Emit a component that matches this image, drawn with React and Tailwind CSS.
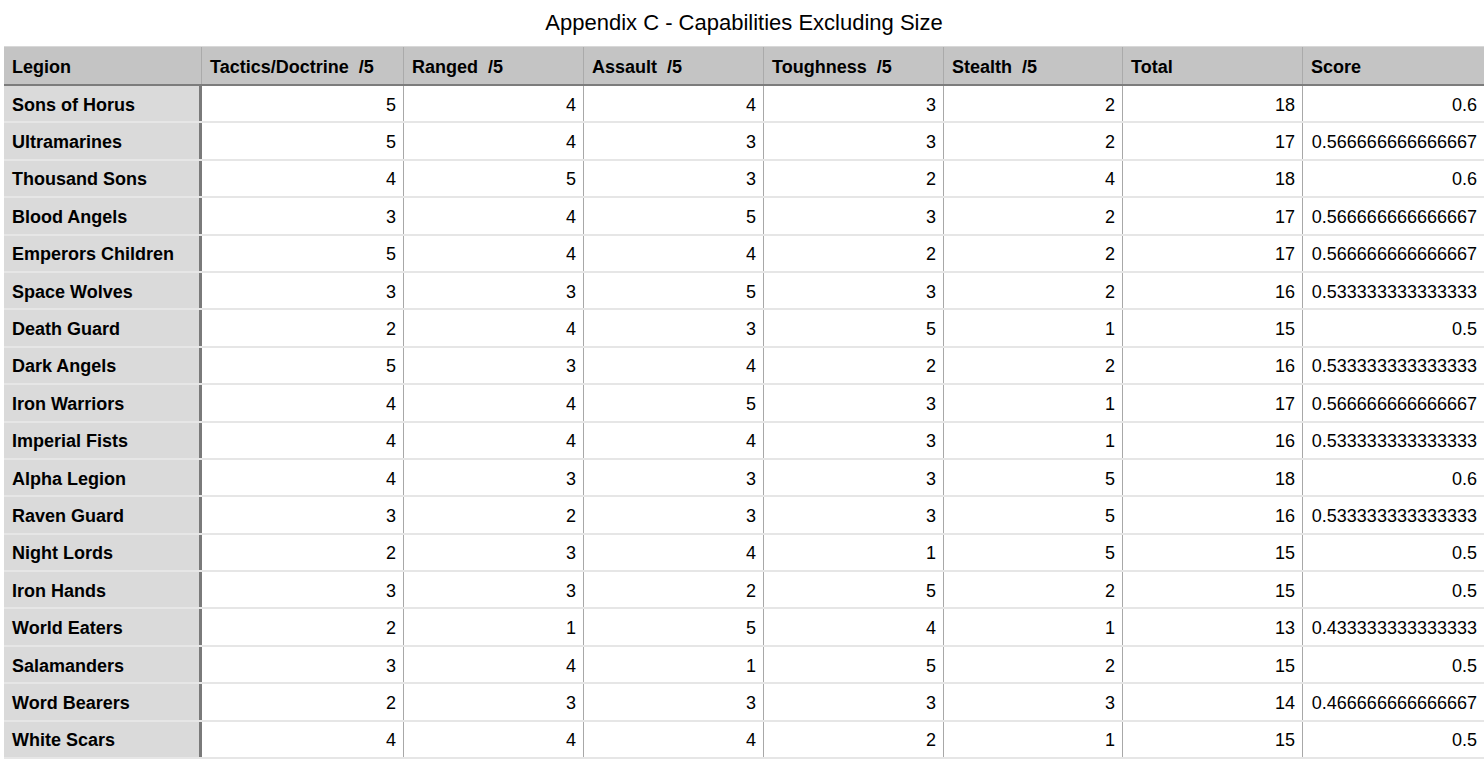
import React from "react";

const rows = [
  ["Sons of Horus", 5, 4, 4, 3, 2, 18, "0.6"],
  ["Ultramarines", 5, 4, 3, 3, 2, 17, "0.566666666666667"],
  ["Thousand Sons", 4, 5, 3, 2, 4, 18, "0.6"],
  ["Blood Angels", 3, 4, 5, 3, 2, 17, "0.566666666666667"],
  ["Emperors Children", 5, 4, 4, 2, 2, 17, "0.566666666666667"],
  ["Space Wolves", 3, 3, 5, 3, 2, 16, "0.533333333333333"],
  ["Death Guard", 2, 4, 3, 5, 1, 15, "0.5"],
  ["Dark Angels", 5, 3, 4, 2, 2, 16, "0.533333333333333"],
  ["Iron Warriors", 4, 4, 5, 3, 1, 17, "0.566666666666667"],
  ["Imperial Fists", 4, 4, 4, 3, 1, 16, "0.533333333333333"],
  ["Alpha Legion", 4, 3, 3, 3, 5, 18, "0.6"],
  ["Raven Guard", 3, 2, 3, 3, 5, 16, "0.533333333333333"],
  ["Night Lords", 2, 3, 4, 1, 5, 15, "0.5"],
  ["Iron Hands", 3, 3, 2, 5, 2, 15, "0.5"],
  ["World Eaters", 2, 1, 5, 4, 1, 13, "0.433333333333333"],
  ["Salamanders", 3, 4, 1, 5, 2, 15, "0.5"],
  ["Word Bearers", 2, 3, 3, 3, 3, 14, "0.466666666666667"],
  ["White Scars", 4, 4, 4, 2, 1, 15, "0.5"],
];

const headers = ["Legion", "Tactics/Doctrine  /5", "Ranged  /5", "Assault  /5", "Toughness  /5", "Stealth  /5", "Total", "Score"];

const cols = "grid grid-cols-[198px_202px_180px_180px_180px_179px_180px_181px]";

export default function App() {
  return (
    <div className="w-[1484px] h-[760px] overflow-hidden bg-white text-black" style={{ fontFamily: '"Liberation Sans", Arial, sans-serif' }}>
      <div className="h-[46px] flex items-center justify-center text-[22px] pb-[2px] pl-[4px]">
        Appendix C - Capabilities Excluding Size
      </div>
      <div className="ml-[4px] w-[1480px]">
        <div className={`${cols} h-[40px] bg-[#c4c4c4] border-t border-[#d8d8d8] border-b-2 border-b-[#7c7c7c]`}>
          {headers.map((h, i) => (
            <div key={i} className={`flex items-center pl-[8px] pt-[4px] font-bold text-[18px] whitespace-pre ${i < 7 ? "border-r border-[#aaaaaa]" : ""}`}>
              {h}
            </div>
          ))}
        </div>
        {rows.map((r, ri) => (
          <div key={ri} className={`${cols} h-[37.4px] border-b-2 border-[#e6e6e6]`}>
            {r.map((c, ci) => (
              <div
                key={ci}
                className={
                  ci === 0
                    ? "flex items-center pl-[8px] pt-[3px] font-bold text-[18px] bg-[#dadada] border-r-[3px] border-r-[#7a7a7a]"
                    : `flex items-center justify-end pr-[7px] pt-[3px] text-[18px] ${ci < 7 ? "border-r border-[#a8a8a8]" : ""}`
                }
              >
                {c}
              </div>
            ))}
          </div>
        ))}
      </div>
    </div>
  );
}
